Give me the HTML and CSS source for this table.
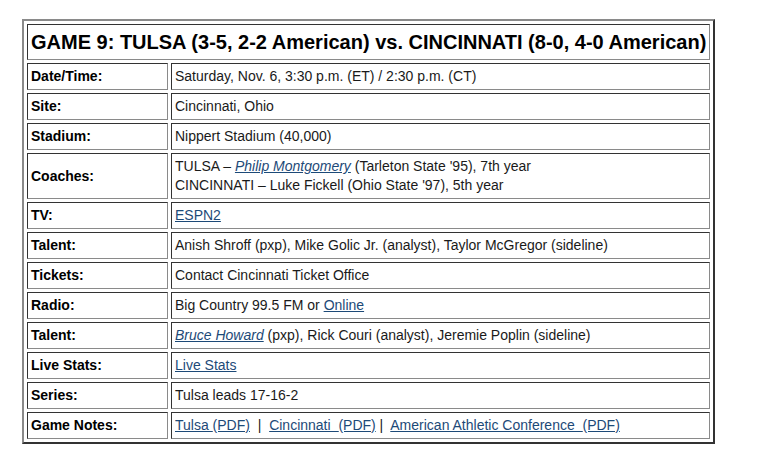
FILE: index.html
```html
<!DOCTYPE html>
<html>
<head>
<meta charset="utf-8">
<link rel="stylesheet" href="styles.css">
</head>
<body>
<div class="wrap">
<table class="game">
  <tr><th colspan="2" class="title">GAME 9: TULSA (3-5, 2-2 American) vs. CINCINNATI (8-0, 4-0 American)</th></tr>
  <tr><td class="lbl">Date/Time:</td><td class="val">Saturday, Nov. 6, 3:30 p.m. (ET) / 2:30 p.m. (CT)</td></tr>
  <tr><td class="lbl">Site:</td><td class="val">Cincinnati, Ohio</td></tr>
  <tr><td class="lbl">Stadium:</td><td class="val">Nippert Stadium (40,000)</td></tr>
  <tr><td class="lbl">Coaches:</td><td class="val">TULSA – <a href="#" class="it">Philip Montgomery</a> (Tarleton State '95), 7th year<br>CINCINNATI – Luke Fickell (Ohio State '97), 5th year</td></tr>
  <tr><td class="lbl">TV:</td><td class="val"><a href="#">ESPN2</a></td></tr>
  <tr><td class="lbl">Talent:</td><td class="val">Anish Shroff (pxp), Mike Golic Jr. (analyst), Taylor McGregor (sideline)</td></tr>
  <tr><td class="lbl">Tickets:</td><td class="val">Contact Cincinnati Ticket Office</td></tr>
  <tr><td class="lbl">Radio:</td><td class="val">Big Country 99.5 FM or <a href="#">Online</a></td></tr>
  <tr><td class="lbl">Talent:</td><td class="val"><a href="#" class="it">Bruce Howard</a> (pxp), Rick Couri (analyst), Jeremie Poplin (sideline)</td></tr>
  <tr><td class="lbl">Live Stats:</td><td class="val"><a href="#">Live Stats</a></td></tr>
  <tr><td class="lbl">Series:</td><td class="val">Tulsa leads 17-16-2</td></tr>
  <tr><td class="lbl">Game Notes:</td><td class="val"><a href="#">Tulsa </a><a href="#">(PDF)</a>&nbsp; |&nbsp; <a href="#">Cincinnati &nbsp;</a><a href="#">(PDF)</a> |&nbsp; <a href="#">American Athletic Conference &nbsp;</a><a href="#">(PDF)</a></td></tr>
</table>
</div>
</body>
</html>
```
FILE: styles.css
```css
html, body {
  margin: 0;
  padding: 0;
  background: #ffffff;
}
body {
  font-family: "Liberation Sans", Arial, sans-serif;
  font-size: 14px;
  color: #111;
}
.wrap {
  padding: 19px 0 0 22px;
}
.game {
  width: 693px;
  border-collapse: separate;
  border-spacing: 3px;
  border-style: solid;
  border-width: 2px;
  border-color: #8a8a8a #333 #333 #8a8a8a;
}
.game th, .game td {
  border-style: solid;
  border-width: 1px;
  border-color: #333 #8a8a8a #8a8a8a #333;
  padding: 3px 3px;
  text-align: left;
  vertical-align: middle;
  line-height: 19px;
}
.game th.title {
  font-size: 20px;
  font-weight: bold;
  line-height: 28px;
  white-space: nowrap;
  padding-right: 0;
  color: #000;
}
.lbl {
  width: 133px;
  font-weight: bold;
  color: #000;
}
.val {
  color: #1a1a1a;
}
a {
  color: #1d4a78;
  text-decoration: underline;
}
a.it {
  font-style: italic;
}
```
